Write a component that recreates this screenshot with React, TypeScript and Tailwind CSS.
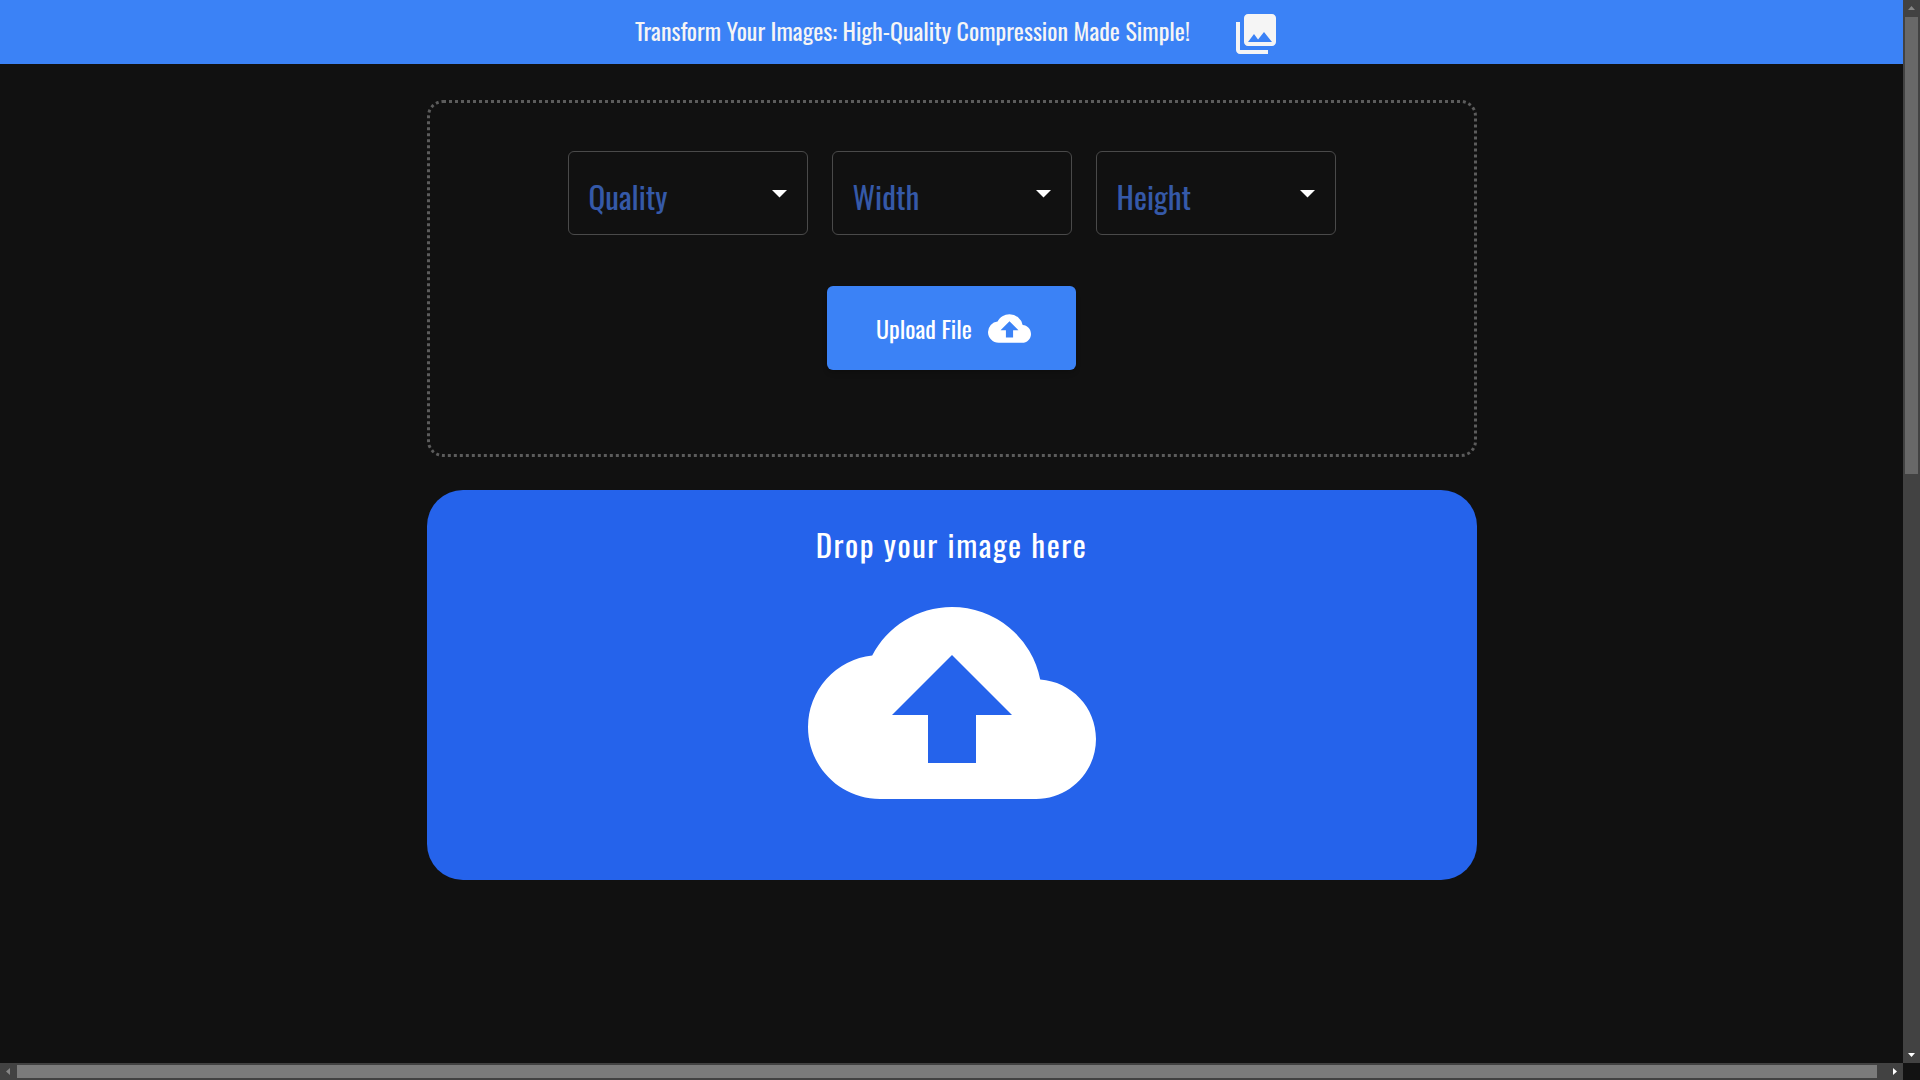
import React from "react";
import { MdCloudUpload, MdPhotoLibrary } from "react-icons/md";

function Field({ label, options }: { label: string; options: string[] }) {
  return (
    <div className="relative w-60">
      <select
        aria-label={label}
        defaultValue=""
        className="h-[84px] w-full appearance-none rounded-md border border-[#4a4a4a] bg-transparent pt-1.5 pr-12 pl-5 text-[31px] text-[#3559a8]"
      >
        <option value="">{label}</option>
        {options.map((o) => (
          <option key={o}>{o}</option>
        ))}
      </select>
      <svg className="pointer-events-none absolute top-[39px] right-[21px] h-2 w-[15px] fill-white" viewBox="0 0 15 8" aria-hidden="true">
        <path d="M0 0h15L7.500 7.500z" />
      </svg>
    </div>
  );
}

function Arrow({ d, color }: { d: string; color: string }) {
  return (
    <span className="flex size-[17px] shrink-0 items-center justify-center" aria-hidden="true">
      <svg width="9" height="9" viewBox="0 0 9 9" fill={color}>
        <path d={d} />
      </svg>
    </span>
  );
}

export default function App() {
  return (
    <div className="grid h-screen grid-cols-[minmax(0,1fr)_17px] grid-rows-[minmax(0,1fr)_17px] bg-[#111111] font-['Oswald','Liberation_Sans_Narrow','Liberation_Sans',sans-serif]">
      <div className="overflow-hidden">
        <header className="flex h-16 items-center justify-center gap-[42px] bg-[#3b82f6] pl-3 text-[#f5f5f5]">
          <h1 className="pb-1 text-2xl whitespace-nowrap">Transform Your Images: High-Quality Compression Made Simple!</h1>
          <MdPhotoLibrary size={48} className="mt-1" aria-hidden="true" />
        </header>
        <main className="mx-auto flex max-w-[1050px] flex-col gap-[33px] pt-9">
          <section className="flex h-[357px] flex-col items-center gap-[51px] rounded-2xl border-3 border-dotted border-[#5c5c5c] pt-12">
            <div className="flex gap-6">
              <Field label="Quality" options={["60", "80", "100"]} />
              <Field label="Width" options={["640", "1280", "1920"]} />
              <Field label="Height" options={["480", "720", "1080"]} />
            </div>
            <button className="flex h-[84px] w-[249px] items-center justify-center gap-4 rounded-md bg-[#3b82f6] pl-1 text-2xl whitespace-nowrap text-white shadow-md">
              Upload File
              <MdCloudUpload size={43} aria-hidden="true" />
            </button>
          </section>
          <section className="flex h-[390px] flex-col items-center rounded-[36px] bg-[#2563eb] pt-8 text-white">
            <h2 className="text-[31px] leading-[44px] tracking-wider">Drop your image here</h2>
            <MdCloudUpload size={288} className="-mt-[7px]" aria-hidden="true" />
          </section>
        </main>
      </div>
      <div className="flex flex-col items-center bg-[#424242]">
        <Arrow d="M4.500 2L8 6H1z" color="#868686" />
        <div className="h-[457px] w-[13px] bg-[#686868]" />
        <div className="grow" />
        <Arrow d="M1 3h7L4.500 7z" color="#ffffff" />
      </div>
      <div className="flex items-center bg-[#424242]">
        <Arrow d="M6 1v7L2 4.500z" color="#868686" />
        <div className="mr-[9px] h-[13px] grow bg-[#7b7b7b]" />
        <Arrow d="M3 1v7l4-3.500z" color="#ffffff" />
      </div>
      <div className="bg-[#121212]" />
    </div>
  );
}
